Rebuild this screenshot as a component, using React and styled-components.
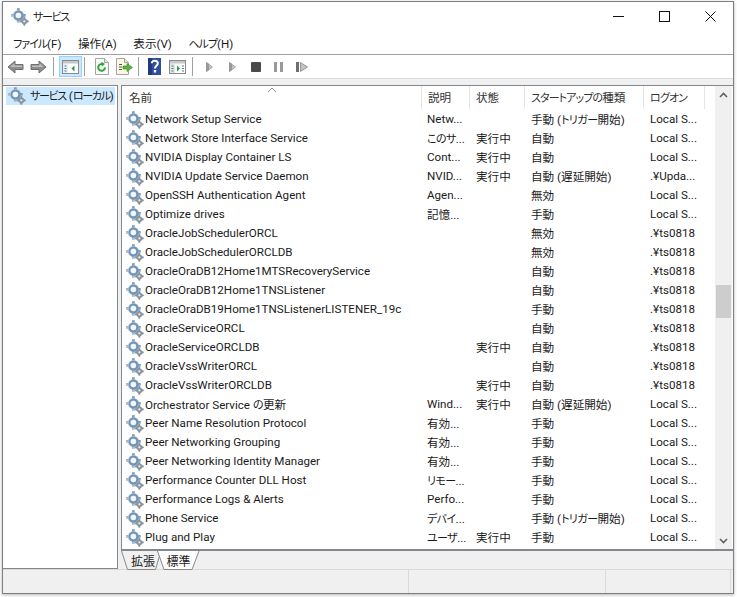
import React from 'react';
import styled, { createGlobalStyle } from 'styled-components';

const FONT = 'Roboto, "Noto Sans CJK JP", sans-serif';
const COLUMNS = '300px 48px 55px 119px 61px';

const GlobalStyle = createGlobalStyle`
  html, body {
    margin: 0;
    padding: 0;
    background: #fff;
  }
  body {
    font-family: ${FONT};
    font-size: 11.6px;
    font-feature-settings: "palt";
    color: #1a1a1a;
  }
`;

const Page = styled.div`
  width: 737px;
  height: 597px;
  padding: 1px 0 0 2px;
  box-sizing: border-box;
  overflow: hidden;
`;

const Window = styled.div`
  width: 732px;
  height: 593px;
  box-sizing: border-box;
  border: 1px solid #7e7e82;
  background: #f0f0f0;
  display: flex;
  flex-direction: column;
  box-shadow: 0 1px 3px rgba(0, 0, 0, 0.3);
`;

const TitleBar = styled.div`
  height: 30px;
  flex: none;
  background: #fff;
  display: flex;
  align-items: center;
  padding-left: 8px;
`;

const Title = styled.span`
  --kana-sp: -1.3px;
  margin: -2px 0 0 4px;
  flex: 1;
`;

const WinButton = styled.div`
  width: 46px;
  height: 30px;
  display: flex;
  align-items: center;
  justify-content: center;
  margin-top: -1px;
`;

const MenuBar = styled.div`
  --kana-sp: -1px;
  height: 23px;
  flex: none;
  background: #fff;
  border-bottom: 1px solid #a0a0a0;
  display: flex;
  align-items: center;
  gap: 16.5px;
  padding: 0 0 1px 10px;
  box-sizing: border-box;
`;

const MenuItem = styled.span`
  white-space: nowrap;
`;

const Kana = styled.span`
  font-size: 11px;
  letter-spacing: var(--kana-sp, -0.6px);
`;

const Toolbar = styled.div`
  height: 23px;
  flex: none;
  background: #fff;
  border-bottom: 1px solid #dcdcdc;
  display: flex;
  align-items: center;
  padding-left: 1px;
`;

const ToolButton = styled.div`
  width: 23px;
  height: 21px;
  box-sizing: border-box;
  display: flex;
  align-items: center;
  justify-content: center;
  background: ${p => (p.$active ? '#cce8ff' : 'transparent')};
  border: 1px solid ${p => (p.$active ? '#99d1ff' : 'transparent')};
`;

const ToolSep = styled.div`
  width: 1px;
  height: 19px;
  background: #a0a0a0;
  margin: 0 ${p => p.$r}px 0 ${p => p.$l}px;
`;

const Strip = styled.div`
  height: 6px;
  flex: none;
`;

const Body = styled.div`
  flex: 1;
  display: flex;
  min-height: 0;
`;

const TreePane = styled.div`
  width: 115px;
  flex: none;
  box-sizing: border-box;
  background: #fff;
  border-top: 1px solid #828790;
  border-right: 1px solid #828790;
  border-bottom: 1px solid #828790;
  padding: 1px 2px 0 3px;
`;

const TreeItem = styled.div`
  height: 18px;
  background: #cce8ff;
  display: flex;
  align-items: center;
  padding-left: 2px;
  gap: 4px;
  white-space: nowrap;
`;

const TreeLabel = styled.span`
  --kana-sp: -1.3px;
  margin-top: -2px;
`;

const RightPane = styled.div`
  flex: 1;
  margin-left: 3px;
  min-width: 0;
  display: flex;
  flex-direction: column;
`;

const ListFrame = styled.div`
  height: 466px;
  box-sizing: border-box;
  flex: none;
  background: #fff;
  border-top: 1px solid #828790;
  border-left: 1px solid #828790;
  border-bottom: 2px solid #828790;
  display: flex;
  overflow: hidden;
`;

const List = styled.div`
  width: 593px;
  flex: none;
  overflow: hidden;
`;

const HeaderRow = styled.div`
  --kana-sp: -0.9px;
  height: 24px;
  display: grid;
  grid-template-columns: ${COLUMNS};
  position: relative;
`;

const SortArrow = styled.svg`
  position: absolute;
  left: 145px;
  top: 1px;
`;

const HeaderCell = styled.div`
  display: flex;
  align-items: center;
  padding: 0 0 1px ${p => p.$pl || 6}px;
  box-sizing: border-box;
  border-right: 1px solid #e5e5e5;
  margin-bottom: 1px;
  color: #333;
  white-space: nowrap;
`;

const Row = styled.div`
  height: 19px;
  display: grid;
  grid-template-columns: ${COLUMNS};
  align-items: center;
`;

const NameCell = styled.div`
  display: flex;
  align-items: center;
  gap: 1px;
  padding-left: 4px;
  white-space: nowrap;
  overflow: hidden;
`;

const NameText = styled.span`
  white-space: pre;
  margin-bottom: 2px;
`;

const Cell = styled.div`
  padding-left: ${p => p.$pl || 6}px;
  margin-bottom: 2px;
  white-space: nowrap;
  overflow: hidden;
`;

const ScrollBar = styled.div`
  width: 17px;
  flex: none;
  background: #f0f0f0;
  display: flex;
  flex-direction: column;
  align-items: center;
`;

const ScrollButton = styled.div`
  height: 17px;
  flex: none;
  display: flex;
  align-items: center;
  justify-content: center;
`;

const ScrollThumb = styled.div`
  width: 15px;
  height: 33px;
  background: #cdcdcd;
  margin-top: 182px;
  flex: none;
`;

const ScrollSpacer = styled.div`
  flex: 1;
`;

const Tabs = styled.div`
  height: 19px;
  flex: none;
  display: flex;
`;

const Tab = styled.div`
  position: relative;
  width: ${p => p.$w}px;
  margin-left: ${p => p.$ml || 0}px;
  padding-left: ${p => p.$pl || 0}px;
  box-sizing: border-box;
  height: 19px;
  display: flex;
  align-items: center;
  justify-content: center;
  font-size: 12px;
  z-index: ${p => (p.$front ? 1 : 0)};
  span {
    position: relative;
  }
  svg {
    position: absolute;
    inset: 0;
  }
`;

const StatusBar = styled.div`
  height: 23px;
  flex: none;
  border-top: 1px solid #d9d9d9;
  display: grid;
  grid-template-columns: 406px 197px 125px 1fr;
`;

const StatusCell = styled.div`
  border-right: 1px solid #d9d9d9;
`;

const jp = text =>
  text.split(/([ぁ-んァ-ヶー]+)/).map((part, i) =>
    i % 2 ? <Kana key={i}>{part}</Kana> : part,
  );

const gearTeeth = (cx, cy, r, n, w) =>
  Array.from({ length: n }, (_, i) => {
    const a = (i * 360) / n;
    return (
      <rect
        key={i}
        x={cx - w / 2}
        y={cy - r}
        width={w}
        height={r * 2}
        rx={0.4}
        transform={`rotate(${a} ${cx} ${cy})`}
      />
    );
  });

const GearIcon = ({ id }) => (
  <svg width="18" height="18" viewBox="0 0 17 17" style={{ flex: 'none' }}>
    <defs>
      <linearGradient id={id} x1="0" y1="0" x2="1" y2="1">
        <stop offset="0" stopColor="#c4d4e4" />
        <stop offset="1" stopColor="#6b8cab" />
      </linearGradient>
    </defs>
    <g fill="#7f8c99">{gearTeeth(12.6, 12.6, 3.9, 4, 1.6)}</g>
    <circle cx="12.6" cy="12.6" r="2.8" fill="#8a949e" />
    <circle cx="12.6" cy="12.6" r="1.1" fill="#e7ecf0" />
    <g fill={`url(#${id})`}>{gearTeeth(7, 7, 6.8, 4, 2.6)}</g>
    <circle cx="7" cy="7" r="5.2" fill={`url(#${id})`} />
    <circle cx="7" cy="7" r="3.6" fill="none" stroke="#6f93b5" strokeWidth="1.6" />
    <circle cx="7" cy="7" r="2.6" fill="#f2f6fa" />
  </svg>
);

const ArrowIcon = ({ flip }) => (
  <svg width="17" height="14" viewBox="0 0 17 14" style={flip ? { transform: 'scaleX(-1)' } : undefined}>
    <path d="M1 7 L8 1 V4.500 H16 V9.500 H8 V13 Z" fill="#8f8f8f" stroke="#6e6e6e" />
    <path d="M3 7 L7.500 3.500 V5.500 H15 V7 Z" fill="#bdbdbd" />
  </svg>
);

const PaneIcon = ({ active }) => (
  <svg width="17" height="16" viewBox="0 0 17 16">
    <rect x=".5" y="1.500" width="16" height="13" fill="#fff" stroke="#8a8a8a" />
    <rect x="1" y="2" width="15" height="2.500" fill="#c2c8cc" />
    <rect x="1" y="5" width="5" height="9" fill={active ? '#e7eef5' : '#dfe8d8'} />
    <path d="M2.500 7h2M2.500 9.500h2M2.500 12h2" stroke="#4a7ba0" />
    <path d={active ? 'M12.500 6.500 L9.500 9.500 L12.500 12.500 Z' : 'M8 6.500 L11 9.500 L8 12.500 Z'} fill="#2d9a3f" />
    {!active && <path d="M13 7h2M13 9.500h2M13 12h2" stroke="#4a7ba0" />}
  </svg>
);

const RefreshIcon = () => (
  <svg width="14" height="17" viewBox="0 0 14 17">
    <path d="M.5 .5 H9.500 L13.500 4.500 V16.500 H.5 Z" fill="#fafafa" stroke="#a5a5a5" />
    <path d="M9.500 .5 V4.500 H13.500" fill="#e4e4e4" stroke="#a5a5a5" />
    <path d="M10 9.500 A3.400 3.400 0 1 1 8 6.300" fill="none" stroke="#31a536" strokeWidth="2" />
    <path d="M6.500 3.800 L10 6 L6.800 8.600 Z" fill="#31a536" />
  </svg>
);

const ExportIcon = () => (
  <svg width="17" height="17" viewBox="0 0 17 17">
    <path d="M.5 .5 H8.500 L12.500 4.500 V16.500 H.5 Z" fill="#fbf6df" stroke="#a5a5a5" />
    <path d="M8.500 .5 V4.500 H12.500" fill="#e4e4e4" stroke="#a5a5a5" />
    <path d="M3 6.500h3M3 9h3M3 11.500h3" stroke="#555" />
    <path d="M7 8 H11 V5.500 L16.500 9.500 L11 13.500 V11 H7 Z" fill="#58b33c" stroke="#3c8a2a" strokeWidth=".6" />
  </svg>
);

const HelpIcon = () => (
  <svg width="13" height="17" viewBox="0 0 13 17">
    <rect width="13" height="17" fill="#2f4f9e" />
    <rect x="0" y="0" width="4" height="17" fill="#1f3a80" />
    <path d="M3.800 5.200 C3.800 1.800 9.800 1.800 9.800 5.300 C9.800 7.800 7 7.800 7 10.500" fill="none" stroke="#fff" strokeWidth="2" />
    <rect x="5.800" y="12" width="2.400" height="2.500" fill="#fff" />
  </svg>
);

const PlayIcon = () => (
  <svg width="7" height="10" viewBox="0 0 7 10">
    <path d="M.5 .5 L6.500 5 L.5 9.500 Z" fill="#c4c4c4" stroke="#a8a8a8" />
    <path d="M0 0 V10 L3 8 V2 Z" fill="#999" />
  </svg>
);

const StopIcon = () => (
  <svg width="10" height="10" viewBox="0 0 10 10">
    <rect width="10" height="10" rx="1" fill="#4a4a4a" />
  </svg>
);

const PauseIcon = () => (
  <svg width="9" height="10" viewBox="0 0 9 10">
    <rect width="3" height="10" fill="#999" />
    <rect x="6" width="3" height="10" fill="#999" />
  </svg>
);

const RestartIcon = () => (
  <svg width="12" height="10" viewBox="0 0 12 10">
    <rect width="3" height="10" fill="#6f6f6f" />
    <path d="M4.500 .5 L11.500 5 L4.500 9.500 Z" fill="#c4c4c4" stroke="#999" />
  </svg>
);

const LS = 'Local S...';
const TS = '.¥ts0818';

const services = [
  ['Network Setup Service', 'Netw...', '', '手動 (トリガー開始)', LS],
  ['Network Store Interface Service', 'このサ...', '実行中', '自動', LS],
  ['NVIDIA Display Container LS', 'Cont...', '実行中', '自動', LS],
  ['NVIDIA Update Service Daemon', 'NVID...', '実行中', '自動 (遅延開始)', '.¥Upda...'],
  ['OpenSSH Authentication Agent', 'Agen...', '', '無効', LS],
  ['Optimize drives', '記憶...', '', '手動', LS],
  ['OracleJobSchedulerORCL', '', '', '無効', TS],
  ['OracleJobSchedulerORCLDB', '', '', '無効', TS],
  ['OracleOraDB12Home1MTSRecoveryService', '', '', '自動', TS],
  ['OracleOraDB12Home1TNSListener', '', '', '自動', TS],
  ['OracleOraDB19Home1TNSListenerLISTENER_19c', '', '', '手動', TS],
  ['OracleServiceORCL', '', '', '自動', TS],
  ['OracleServiceORCLDB', '', '実行中', '自動', TS],
  ['OracleVssWriterORCL', '', '', '自動', TS],
  ['OracleVssWriterORCLDB', '', '実行中', '自動', TS],
  ['Orchestrator Service の更新', 'Wind...', '実行中', '自動 (遅延開始)', LS],
  ['Peer Name Resolution Protocol', '有効...', '', '手動', LS],
  ['Peer Networking Grouping', '有効...', '', '手動', LS],
  ['Peer Networking Identity Manager', '有効...', '', '手動', LS],
  ['Performance Counter DLL Host', 'リモー...', '', '手動', LS],
  ['Performance Logs & Alerts', 'Perfo...', '', '手動', LS],
  ['Phone Service', 'デバイ...', '', '手動 (トリガー開始)', LS],
  ['Plug and Play', 'ユーザ...', '実行中', '手動', LS],
];

function App() {
  return (
    <Page>
      <GlobalStyle />
      <Window>
        <TitleBar>
          <GearIcon id="gear-title" />
          <Title>{jp('サービス')}</Title>
          <WinButton>
            <svg width="11" height="11" viewBox="0 0 11 11"><path d="M0 5.500H11" stroke="#111" /></svg>
          </WinButton>
          <WinButton>
            <svg width="11" height="11" viewBox="0 0 11 11"><rect x=".5" y=".5" width="10" height="10" fill="none" stroke="#111" /></svg>
          </WinButton>
          <WinButton>
            <svg width="11" height="11" viewBox="0 0 11 11"><path d="M.5 .5L10.500 10.500M10.500 .5L.5 10.500" stroke="#111" /></svg>
          </WinButton>
        </TitleBar>
        <MenuBar>
          <MenuItem>{jp('ファイル(F)')}</MenuItem>
          <MenuItem>{jp('操作(A)')}</MenuItem>
          <MenuItem>{jp('表示(V)')}</MenuItem>
          <MenuItem>{jp('ヘルプ(H)')}</MenuItem>
        </MenuBar>
        <Toolbar>
          <ToolButton><ArrowIcon /></ToolButton>
          <ToolButton><ArrowIcon flip /></ToolButton>
          <ToolSep $l={3} $r={5} />
          <ToolButton $active><PaneIcon active /></ToolButton>
          <ToolSep $l={2} $r={5} />
          <ToolButton><RefreshIcon /></ToolButton>
          <ToolButton><ExportIcon /></ToolButton>
          <ToolSep $l={2} $r={4} />
          <ToolButton><HelpIcon /></ToolButton>
          <ToolButton><PaneIcon /></ToolButton>
          <ToolSep $l={3} $r={5} />
          <ToolButton><PlayIcon /></ToolButton>
          <ToolButton><PlayIcon /></ToolButton>
          <ToolButton><StopIcon /></ToolButton>
          <ToolButton><PauseIcon /></ToolButton>
          <ToolButton><RestartIcon /></ToolButton>
        </Toolbar>
        <Strip />
        <Body>
          <TreePane>
            <TreeItem>
              <GearIcon id="gear-tree" />
              <TreeLabel>{jp('サービス (ローカル)')}</TreeLabel>
            </TreeItem>
          </TreePane>
          <RightPane>
            <ListFrame>
              <List>
                <HeaderRow>
                  <SortArrow width="10" height="6" viewBox="0 0 10 6">
                    <path d="M1 5L5 1L9 5" fill="none" stroke="#8a8a8a" />
                  </SortArrow>
                  <HeaderCell $pl={7}>名前</HeaderCell>
                  <HeaderCell>説明</HeaderCell>
                  <HeaderCell>状態</HeaderCell>
                  <HeaderCell><span>{jp('スタートアップの種類')}</span></HeaderCell>
                  <HeaderCell><span>{jp('ログオン')}</span></HeaderCell>
                </HeaderRow>
                {services.map((s, i) => (
                  <Row key={s[0]}>
                    <NameCell>
                      <GearIcon id={`gear-${i}`} />
                      <NameText>{jp(s[0])}</NameText>
                    </NameCell>
                    <Cell $pl={5}>{jp(s[1])}</Cell>
                    <Cell>{s[2]}</Cell>
                    <Cell>{jp(s[3])}</Cell>
                    <Cell>{s[4]}</Cell>
                  </Row>
                ))}
              </List>
              <ScrollBar>
                <ScrollButton>
                  <svg width="9" height="6" viewBox="0 0 9 6"><path d="M1 5L4.500 1.500L8 5" fill="none" stroke="#606060" strokeWidth="1.600" /></svg>
                </ScrollButton>
                <ScrollThumb />
                <ScrollSpacer />
                <ScrollButton>
                  <svg width="9" height="6" viewBox="0 0 9 6"><path d="M1 1L4.500 4.500L8 1" fill="none" stroke="#606060" strokeWidth="1.600" /></svg>
                </ScrollButton>
              </ScrollBar>
            </ListFrame>
            <Tabs>
              <Tab $w={39} $pl={5}>
                <svg width="39" height="19" viewBox="0 0 39 19">
                  <path d="M.5 0 L6.500 18.500 H34.500 L38.500 5 L37 0" fill="#f0f0f0" stroke="#8a8a8a" />
                </svg>
                <span>拡張</span>
              </Tab>
              <Tab $w={43} $ml={-3} $front>
                <svg width="43" height="19" viewBox="0 0 43 19">
                  <path d="M.5 0 L7 18.500 H35 L42 0 Z" fill="#fff" />
                  <path d="M.5 0 L7 18.500 H35 L42 0" fill="none" stroke="#8a8a8a" />
                </svg>
                <span>標準</span>
              </Tab>
            </Tabs>
          </RightPane>
        </Body>
        <StatusBar>
          <StatusCell />
          <StatusCell />
          <StatusCell />
        </StatusBar>
      </Window>
    </Page>
  );
}

export default App;
